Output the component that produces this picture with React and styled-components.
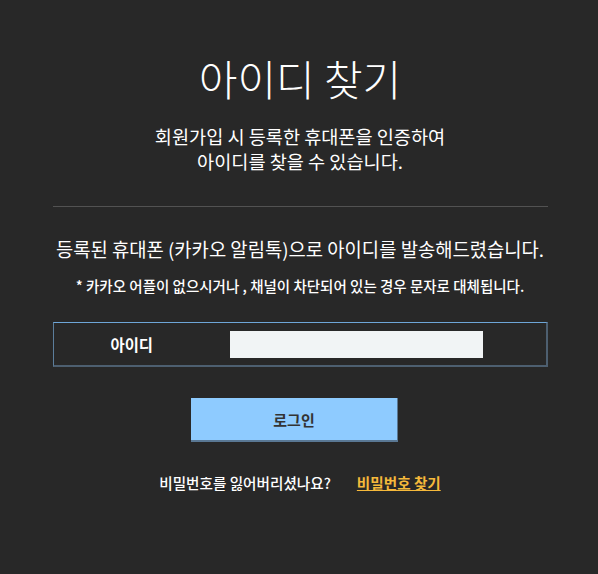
import styled, { createGlobalStyle } from "styled-components";

const GlobalStyle = createGlobalStyle`
  html, body {
    margin: 0;
    background: #282828;
    font-family: "Noto Sans CJK KR", "Noto Sans", sans-serif;
  }
`;

const Page = styled.div`
  min-height: 574px;
  box-sizing: border-box;
  padding: 49px 0 0 2px;
  display: flex;
  flex-direction: column;
  align-items: center;
  color: #fff;
`;

const Title = styled.h1`
  margin: 0;
  font-size: 42px;
  font-weight: 300;
  line-height: 58px;
`;

const Lead = styled.p`
  margin: 16px 0 0;
  font-size: 18.6px;
  line-height: 25px;
  text-align: center;
`;

const Divider = styled.hr`
  width: 495px;
  margin: 33px 0 0;
  border: 0;
  border-top: 1px solid #525252;
`;

const Notice = styled.p`
  margin: 28px 0 0;
  font-size: 18.8px;
  line-height: 27px;
  text-align: center;
`;

const Note = styled.p`
  margin: 14px 0 0;
  font-size: 14.5px;
  font-weight: 500;
  line-height: 20px;
  text-align: center;
`;

const ResultBox = styled.div`
  box-sizing: border-box;
  width: 495px;
  height: 45px;
  margin-top: 26px;
  display: flex;
  align-items: center;
  border-top: 1px solid #6ea6d8;
  border-left: 1px solid #5c7e9c;
  border-right: 2px solid #4d5f70;
  border-bottom: 2px solid #4d5f70;
`;

const Label = styled.span`
  width: 176px;
  padding-left: 57px;
  box-sizing: border-box;
  font-size: 15.4px;
  font-weight: 700;
`;

const Field = styled.div`
  width: 253px;
  height: 27px;
  background: #f1f4f5;
`;

const LoginButton = styled.button`
  box-sizing: border-box;
  width: 207px;
  height: 44px;
  margin: 31px 11px 0 0;
  border: 0;
  border-right: 1px solid #5a7894;
  border-bottom: 2px solid #5a7894;
  background: #8ecbff;
  color: #333;
  font-family: inherit;
  font-size: 15px;
  font-weight: 700;
`;

const Links = styled.div`
  margin-top: 30px;
  display: flex;
  gap: 26px;
  font-size: 14.6px;
  font-weight: 500;
`;

const FindLink = styled.a`
  color: #f6b93b;
  font-weight: 700;
  text-decoration: underline;
`;

export default function App() {
  return (
    <>
      <GlobalStyle />
      <Page>
        <Title>아이디 찾기</Title>
        <Lead>
          회원가입 시 등록한 휴대폰을 인증하여
          <br />
          아이디를 찾을 수 있습니다.
        </Lead>
        <Divider />
        <Notice>등록된 휴대폰 (카카오 알림톡)으로 아이디를 발송해드렸습니다.</Notice>
        <Note>* 카카오 어플이 없으시거나 , 채널이 차단되어 있는 경우 문자로 대체됩니다.</Note>
        <ResultBox>
          <Label>아이디</Label>
          <Field />
        </ResultBox>
        <LoginButton>로그인</LoginButton>
        <Links>
          <span>비밀번호를 잃어버리셨나요?</span>
          <FindLink>비밀번호 찾기</FindLink>
        </Links>
      </Page>
    </>
  );
}
